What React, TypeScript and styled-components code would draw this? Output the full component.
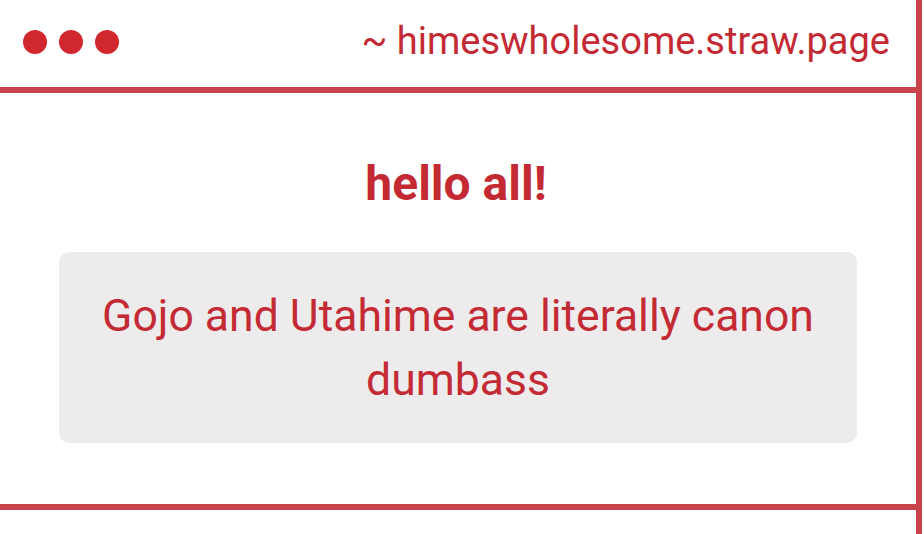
import React from "react";
import styled, { createGlobalStyle } from "styled-components";

const RED = "#c42a33";
const DOT = "#d1272f";
const LINE = "#c9434a";

const Global = createGlobalStyle`
  html, body { margin: 0; padding: 0; background: #ffffff; }
  body { font-family: Roboto, "Liberation Sans", sans-serif; }
`;

const Window = styled.div`
  width: 916px;
  border-right: 6px solid ${LINE};
  height: 534px;
  display: flex;
  flex-direction: column;
`;

const TitleBar = styled.header`
  height: 87px;
  border-bottom: 6px solid ${LINE};
  display: flex;
  align-items: center;
  justify-content: space-between;
  padding: 0 26px 0 23px;
`;

const Dots = styled.div`
  display: flex;
  gap: 12px;
  margin-top: -3px;
`;

const Dot = styled.span`
  width: 24px;
  height: 24px;
  border-radius: 50%;
  background: ${DOT};
`;

const Address = styled.div`
  color: ${RED};
  font-size: 38px;
  margin-top: -6px;
`;

const Content = styled.main`
  height: 411px;
  border-bottom: 6px solid ${LINE};
  display: flex;
  flex-direction: column;
  align-items: center;
  padding: 0 59px;
`;

const Heading = styled.h1`
  margin: 64px 0 0;
  color: ${RED};
  font-size: 48px;
  font-weight: 700;
  line-height: 54px;
  padding-right: 4px;
`;

const Card = styled.div`
  margin-top: 41px;
  width: 100%;
  box-sizing: border-box;
  height: 191px;
  background: #edebec;
  border-radius: 10px;
  display: flex;
  align-items: center;
  justify-content: center;
  text-align: center;
  padding: 0 30px;
  color: ${RED};
  font-size: 44.5px;
  line-height: 64px;
`;

export default function App() {
  return (
    <>
      <Global />
      <Window>
        <TitleBar>
          <Dots>
            <Dot />
            <Dot />
            <Dot />
          </Dots>
          <Address>~ himeswholesome.straw.page</Address>
        </TitleBar>
        <Content>
          <Heading>hello all!</Heading>
          <Card>Gojo and Utahime are literally canon dumbass</Card>
        </Content>
      </Window>
    </>
  );
}
